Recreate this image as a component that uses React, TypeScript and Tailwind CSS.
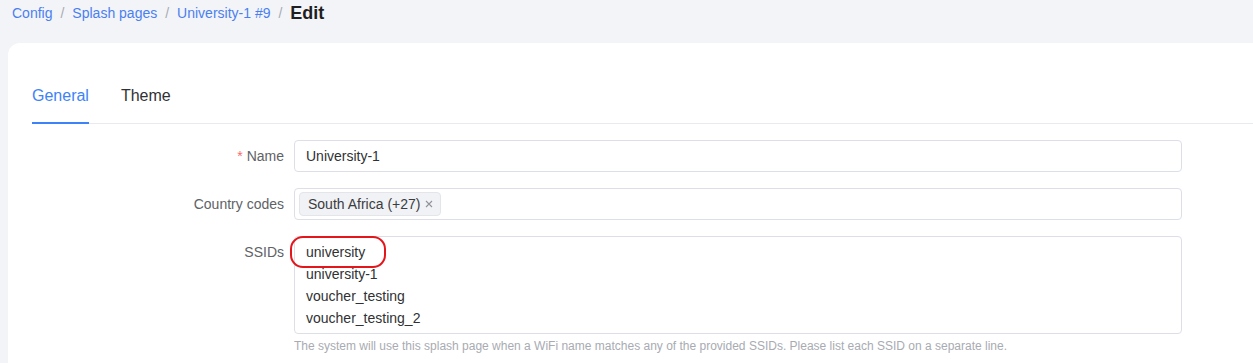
export default function App() {
  const ssids = ['university', 'university-1', 'voucher_testing', 'voucher_testing_2']

  return (
    <div className="h-[363px] w-[1253px] overflow-hidden bg-[#f3f4f8] font-['Liberation_Sans',Arial,sans-serif]">
      {/* Breadcrumb */}
      <div className="flex h-[43px] items-start pl-3 pt-[2px] text-sm">
        <div className="flex h-[22px] items-center">
          <span className="text-[#4a7ff0]">Config</span>
          <span className="mx-[8px] text-[#a8abb2]">/</span>
          <span className="text-[#4a7ff0]">Splash pages</span>
          <span className="mx-[8px] text-[#a8abb2]">/</span>
          <span className="text-[#4a7ff0]">University-1 #9</span>
          <span className="mx-[8px] text-[#a8abb2]">/</span>
          <span className="text-lg font-bold text-[#1f1f1f]">Edit</span>
        </div>
      </div>

      {/* Card */}
      <div className="ml-2 h-[320px] rounded-tl-xl bg-white pl-6">
        {/* Tabs */}
        <div className="flex gap-8 border-b border-[#e9eaee] pt-[41px]">
          <div className="-mb-px border-b-2 border-[#3e82f7] pb-[14px] text-base leading-6 text-[#3e82f7]">General</div>
          <div className="-mb-px border-b-2 border-transparent pb-[14px] text-base leading-6 text-[#303133]">Theme</div>
        </div>

        {/* Form */}
        <div className="mr-[71px] pt-4 text-sm">
          <div className="mb-4 flex items-center">
            <label className="w-[262px] shrink-0 pr-[10px] text-right text-[#606266]">
              <span className="mr-1 text-[#f56c6c]">*</span>Name
            </label>
            <div className="flex h-8 flex-1 items-center rounded border border-[#dcdfe6] px-[11px] text-[#303133]">
              University-1
            </div>
          </div>

          <div className="mb-4 flex items-center">
            <label className="w-[262px] shrink-0 pr-[10px] text-right text-[#606266]">Country codes</label>
            <div className="flex h-8 flex-1 items-center rounded border border-[#dcdfe6] px-1">
              <span className="flex h-6 items-center gap-1 rounded border border-[#e4e5e8] bg-[#f0f2f5] pl-[8px] pr-[6px] text-[#3b3c3f]">
                South Africa (+27)
                <svg width="10" height="10" viewBox="0 0 10 10" className="text-[#909399]">
                  <path d="M2 2 L8 8 M8 2 L2 8" stroke="currentColor" strokeWidth="1.1" />
                </svg>
              </span>
            </div>
          </div>

          <div className="flex items-start">
            <label className="w-[262px] shrink-0 pr-[10px] pt-[5px] text-right leading-[22px] text-[#606266]">SSIDs</label>
            <div className="flex-1">
              <div className="relative h-[98px] rounded border border-[#dcdfe6] px-[11px] py-[4px] leading-[22px] text-[#303133]">
                {ssids.map((s) => (
                  <div key={s}>{s}</div>
                ))}
                <div className="pointer-events-none absolute left-[-5px] top-[-1px] h-[32px] w-[96px] rounded-[13px] border-2 border-[#e3161c]" />
              </div>
              <div className="mt-[2px] text-xs leading-5 text-[#a8abb2]">
                The system will use this splash page when a WiFi name matches any of the provided SSIDs. Please list each SSID on a separate line.
              </div>
            </div>
          </div>
        </div>
      </div>
    </div>
  )
}
